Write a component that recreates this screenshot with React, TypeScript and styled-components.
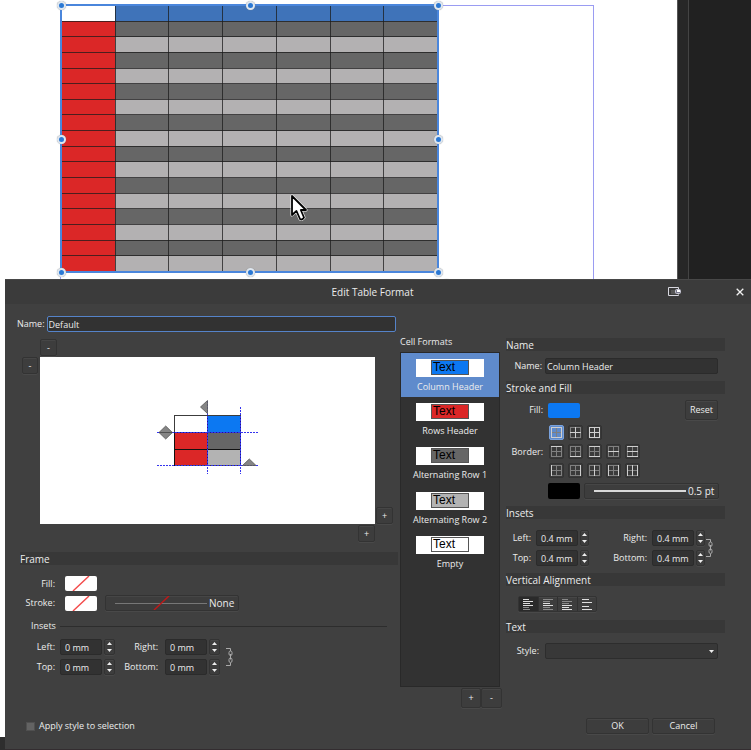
import React, { useId } from "react";
import styled, { createGlobalStyle, css } from "styled-components";

const GlobalStyle = createGlobalStyle`
  *, *::before, *::after { box-sizing: border-box; }
  body { margin: 0; background: #2e2e2e; }
  body, button, input, select {
    font-family: "Open Sans", "Noto Sans", sans-serif;
    font-size: 9px;
    line-height: 12px;
    color: #ececec;
  }
  button { padding: 0; }
`;

/* ---------- document area ---------- */

const Screen = styled.div`
  display: flex;
  flex-direction: column;
  min-height: 100vh;
`;

const Canvas = styled.div`
  display: flex;
  height: 279px;
  overflow: hidden;
`;

const Page = styled.div`
  flex: 1;
  display: flex;
  padding: 5px 83px 0 60px;
  background: #fff;
`;

const MarginFrame = styled.div`
  flex: 1;
  border: 1px solid #9a9cf2;
  border-bottom: 0;
`;

const SidePanel = styled.div`
  width: 74px;
  padding-left: 10px;
  background: #272727;
  border-left: 1px solid #555;
`;

const SidePanelInner = styled.div`
  height: 100%;
  background: #212121;
  border-left: 1px solid #444;
`;

const Selection = styled.div`
  position: relative;
  width: 377px;
  height: 267px;
  margin-top: -1px;
  &::after {
    content: "";
    position: absolute;
    inset: -1px;
    border: 2px solid #4a86dc;
  }
`;

const SheetTable = styled.table`
  width: 100%;
  height: 100%;
  table-layout: fixed;
  border-collapse: collapse;
`;

const cellColors = {
  empty: "#ffffff",
  column: "#3f73b9",
  row: "#db2727",
  dark: "#666666",
  light: "#b3b1b2",
};
type CellKind = keyof typeof cellColors;

const SheetCell = styled.td<{ $kind: CellKind }>`
  height: 15px;
  padding: 0;
  background: ${(p) => cellColors[p.$kind]};
  border: 1px solid rgba(28, 28, 28, 0.75);
`;

const Handle = styled.i<{ $x: number; $y: number }>`
  position: absolute;
  z-index: 1;
  left: ${(p) => p.$x}%;
  top: ${(p) => p.$y}%;
  width: 9px;
  height: 9px;
  margin: -4px 0 0 -4px;
  border: 2px solid #dfe7f0;
  border-radius: 50%;
  background: #2a78d4;
  box-shadow: 0 0 1px #888;
`;

const Pointer = styled.svg`
  position: absolute;
  left: 229px;
  top: 189px;
`;

const handles = [
  [0, 0], [50, 0], [100, 0],
  [0, 50], [100, 50],
  [0, 100], [50, 100], [100, 100],
  [102, 104],
];
const columns = [0, 1, 2, 3, 4, 5, 6];
const rows = Array.from({ length: 17 }, (_, i) => i);

function kindOf(row: number, col: number): CellKind {
  if (row === 0) return col === 0 ? "empty" : "column";
  if (col === 0) return "row";
  return row % 2 ? "dark" : "light";
}

function Sheet() {
  return (
    <Selection>
      <SheetTable>
        <tbody>
          {rows.map((r) => (
            <tr key={r}>
              {columns.map((c) => <SheetCell key={c} $kind={kindOf(r, c)} />)}
            </tr>
          ))}
        </tbody>
      </SheetTable>
      {handles.map(([x, y]) => <Handle key={`${x}-${y}`} $x={x} $y={y} />)}
      <Pointer width="18" height="28" viewBox="0 0 18 28">
        <path d="M2 2V21L6.500 17L10 25Q12 26.500 14 23.500L10.800 16H16Z" fill="#fff" stroke="#fff" strokeWidth="3" strokeLinejoin="round" />
        <path d="M2 2V21L6.500 17L10 25Q12 26.500 14 23.500L10.800 16H16Z" fill="#fff" stroke="#000" strokeWidth="1.800" strokeLinejoin="round" />
      </Pointer>
    </Selection>
  );
}

/* ---------- dialog frame ---------- */

const Lower = styled.div`
  flex: 1;
  display: flex;
`;

const Gutter = styled.div`
  width: 5px;
  margin-bottom: 13px;
  background: #fff;
`;

const Dialog = styled.form`
  flex: 1;
  display: flex;
  flex-direction: column;
  background: #404040;
  border-bottom: 1px solid #332d30;
`;

const TitleBar = styled.header`
  display: grid;
  grid-template-columns: 1fr auto 1fr;
  align-items: center;
  height: 25px;
  padding-right: 3px;
  border-top: 1px solid #484848;
  background: #3b3b3b;
`;

const Title = styled.h1`
  grid-column: 2;
  margin: 0 8px 0 0;
  font-size: 10px;
  line-height: 14px;
  font-weight: 400;
`;

const WindowButtons = styled.div`
  display: flex;
  justify-content: flex-end;
  gap: 49px;
`;

const WindowButton = styled.button`
  width: 16px;
  height: 16px;
  display: grid;
  place-items: center;
  border: 0;
  background: none;
`;

const Body = styled.div`
  display: flex;
  align-items: flex-start;
`;

const PreviewColumn = styled.div`
  flex: 1;
  padding: 12px 2px 0 12px;
`;

const FormatsColumn = styled.div`
  width: 102px;
  margin-right: 4px;
  padding-top: 32px;
`;

const DetailsColumn = styled.div`
  width: 219px;
  margin-right: 26px;
  padding-top: 34px;
`;

/* ---------- shared controls ---------- */

const raised = css`
  border: 1px solid #333;
  border-radius: 2px;
  background: #3d3d3d;
  box-shadow: 0 1px 0 #494949, inset 0 1px 0 #464646;
`;

const PushButton = styled.button<{ $w: number; $h: number }>`
  ${raised}
  width: ${(p) => p.$w}px;
  height: ${(p) => p.$h}px;
`;

const TextBox = styled.input<{ $focused?: boolean }>`
  flex: 1;
  min-width: 0;
  width: 100%;
  height: 16px;
  padding: 0 1px;
  border: 1px solid ${(p) => (p.$focused ? "#5583c9" : "#2b2b2b")};
  border-radius: 2px;
  background: #323232;
  outline: none;
`;

const NumberBox = styled(TextBox)`
  padding: 0 4px;
`;

const SectionTitle = styled.h2`
  height: 13px;
  margin: 0;
  background: #383838;
  font-size: 10px;
  line-height: 15px;
  font-weight: 400;
`;

const DetailRows = styled.div`
  margin: 0 7px 7px 0;
`;

const Line = styled.div<{ $label: number; $gap?: number; $top: number }>`
  display: grid;
  grid-template-columns: ${(p) => p.$label}px 1fr;
  column-gap: ${(p) => p.$gap ?? 10}px;
  align-items: center;
  margin-top: ${(p) => p.$top}px;
  > :first-child { justify-self: end; white-space: nowrap; }
`;

const Controls = styled.div<{ $spread?: boolean }>`
  grid-column: 2;
  display: flex;
  align-items: center;
  justify-content: ${(p) => (p.$spread ? "space-between" : "flex-start")};
`;

const Swatch = styled.button<{ $color: string; $tall?: boolean }>`
  width: 32px;
  height: ${(p) => (p.$tall ? 16 : 15)}px;
  border: 0;
  border-radius: 2px;
  background: ${(p) => p.$color};
  overflow: hidden;
  svg { display: block; }
`;

const StrokeButton = styled.button`
  ${raised}
  flex: 1;
  height: 16px;
  margin-left: 4px;
  padding: 0 4px 0 9px;
  display: flex;
  align-items: center;
  gap: 2px;
  font-size: 10px;
  svg { flex: 1; min-width: 0; }
`;

const FrameStrokeButton = styled(StrokeButton)`
  flex: 0 1 134px;
  margin-left: 8px;
`;

function NoFillSwatch({ id, label }: { id: string; label: string }) {
  return (
    <Swatch type="button" id={id} aria-label={label} $color="#fff">
      <svg width="32" height="15" viewBox="0 0 32 15">
        <path d="M8 15L24 0" stroke="#f34a4a" strokeWidth="1.400" />
      </svg>
    </Swatch>
  );
}

/* ---------- inset editor ---------- */

const InsetsGrid = styled.div<{ $columns: string; $top: number }>`
  display: grid;
  grid-template-columns: ${(p) => p.$columns};
  grid-auto-rows: 16px;
  row-gap: 4px;
  align-items: center;
  margin: ${(p) => p.$top}px 0 7px;
`;

const InsetLabel = styled.label<{ $gap: number }>`
  justify-self: end;
  padding-right: ${(p) => p.$gap}px;
  white-space: nowrap;
`;

const Stepper = styled.span<{ $w: number }>`
  ${raised}
  display: grid;
  grid-template-rows: 1fr 1fr;
  width: ${(p) => p.$w}px;
  height: 16px;
  margin-left: 2px;
`;

const StepButton = styled.button`
  display: grid;
  place-items: center;
  border: 0;
  background: none;
`;

const ChainButton = styled.button`
  grid-column: 7;
  grid-row: 1 / span 2;
  border: 0;
  background: none;
  svg { display: block; }
`;

type InsetStyle = { value: string; gap: number; stepper: number };

function InsetField({ label, value, gap, stepper }: InsetStyle & { label: string }) {
  const id = useId();
  return (
    <>
      <InsetLabel htmlFor={id} $gap={gap}>{label}:</InsetLabel>
      <NumberBox id={id} defaultValue={value} />
      <Stepper $w={stepper}>
        <StepButton type="button" aria-label={`Increase ${label}`}>
          <svg width="5" height="3" viewBox="0 0 5 3"><path d="M0 3L2.500 0L5 3Z" fill="#eee" /></svg>
        </StepButton>
        <StepButton type="button" aria-label={`Decrease ${label}`}>
          <svg width="5" height="3" viewBox="0 0 5 3"><path d="M0 0L2.500 3L5 0Z" fill="#eee" /></svg>
        </StepButton>
      </Stepper>
    </>
  );
}

function Insets({ columns: cols, top, gap, ...rest }: InsetStyle & { columns: string; top: number }) {
  return (
    <InsetsGrid $columns={cols} $top={top}>
      <InsetField label="Left" gap={5} {...rest} />
      <InsetField label="Right" gap={gap} {...rest} />
      <ChainButton type="button" aria-label="Link insets">
        <svg width="7" height="20" viewBox="0 0 7 20" fill="none" stroke="#aaa" strokeWidth="1">
          <path d="M0 1.500H4.500V4M0 18.500H4.500V16" />
          <rect x="3" y="4" width="3" height="4.500" rx="1.500" />
          <rect x="3" y="11" width="3" height="4.500" rx="1.500" />
          <path d="M4.500 7V12.500" />
        </svg>
      </ChainButton>
      <InsetField label="Top" gap={5} {...rest} />
      <InsetField label="Bottom" gap={gap} {...rest} />
    </InsetsGrid>
  );
}

/* ---------- preview column ---------- */

const NameLine = styled.div`
  display: flex;
  align-items: center;
  gap: 2px;
  margin-right: 2px;
`;

const PreviewGrid = styled.div`
  display: grid;
  grid-template-columns: 18px 1fr 18px;
  grid-template-rows: 18px 167px 18px;
  margin: 7px 5px 0 5px;
`;

const GridSlot = styled.div<{ $area: string; $align: string }>`
  display: flex;
  grid-area: ${(p) => p.$area};
  place-self: ${(p) => p.$align};
`;

const PreviewPane = styled.div`
  grid-area: 2 / 2;
  display: grid;
  place-items: center;
  background: #fff;
`;

const FrameSection = styled.section`
  margin: 10px 0 0 3px;
`;

const InsetsDivider = styled.h3`
  display: flex;
  align-items: center;
  gap: 4px;
  margin: 9px 11px 0;
  font-size: 9px;
  font-weight: 400;
  &::after { content: ""; flex: 1; height: 1px; background: #2d2d2d; }
`;

function FormatDiagram() {
  return (
    <svg width="121" height="91" viewBox="107 38 121 91">
      <g stroke="#3c3c3c" strokeWidth="1">
        <rect x="134.500" y="58.500" width="33" height="17" fill="#fff" />
        <rect x="167.500" y="58.500" width="33" height="17" fill="#0c78f2" />
        <rect x="134.500" y="75.500" width="33" height="17" fill="#db2727" />
        <rect x="167.500" y="75.500" width="33" height="17" fill="#666" />
        <rect x="134.500" y="92.500" width="33" height="16" fill="#db2727" />
        <rect x="167.500" y="92.500" width="33" height="16" fill="#b3b3b3" />
      </g>
      <path d="M134 92.500H201M134.500 75V109" stroke="#111" fill="none" />
      <path d="M134 75.500H201M167.500 59V109M200.500 59V109" stroke="#1a1a8c" fill="none" />
      <path d="M117 75.500H218M117 108.500H218M167.500 44V117M200.500 50V117" stroke="#3434ee" strokeDasharray="2 1" fill="none" />
      <g fill="#858585" stroke="#555" strokeWidth="0.800">
        <path d="M125.700 69L132.400 75.500L125.700 82L119 75.500Z" />
        <path d="M160.500 50L167.500 43.500V56.500Z" />
        <path d="M209.300 102L202.500 108.500H216Z" />
      </g>
      <path d="M119 75.500H132" stroke="#444" strokeWidth="0.800" />
    </svg>
  );
}

/* ---------- cell formats ---------- */

const FormatsLabel = styled.h2`
  margin: 0 0 4px;
  font-size: 9px;
  font-weight: 400;
`;

const FormatList = styled.ul`
  display: grid;
  grid-template-rows: repeat(5, 1fr) 112px;
  width: 100px;
  height: 335px;
  margin: 0;
  padding: 0;
  list-style: none;
  border: 1px solid #292929;
  background: #323232;
`;

const FormatItem = styled.button<{ $selected: boolean }>`
  display: flex;
  flex-direction: column;
  align-items: center;
  gap: 4px;
  width: 100%;
  height: 100%;
  padding-top: 6px;
  border: 0;
  background: ${(p) => (p.$selected ? "#5f8bcc" : "transparent")};
  white-space: nowrap;
`;

const Thumb = styled.span`
  width: 68px;
  height: 18px;
  padding: 1px 15px 1px 15px;
  background: #fff;
`;

const ThumbCell = styled.span<{ $color: string }>`
  display: block;
  height: 15px;
  padding-left: 1px;
  border: 1px solid #555;
  background: ${(p) => p.$color};
  color: #000;
  font: 12px/12px "Liberation Sans", Arial, sans-serif;
  text-align: left;
`;

const ListButtons = styled.div`
  display: flex;
  justify-content: flex-end;
  margin-top: 1px;
`;

const formats = [
  { name: "Column Header", color: "#0c78f2" },
  { name: "Rows Header", color: "#db2727" },
  { name: "Alternating Row 1", color: "#666" },
  { name: "Alternating Row 2", color: "#b3b3b3" },
  { name: "Empty", color: "#fff" },
];

/* ---------- border and alignment pickers ---------- */

const BorderGrid = styled.div`
  display: grid;
  gap: 4px;
`;

const BorderRow = styled.div`
  display: flex;
  gap: 4px;
`;

const BorderButton = styled.button<{ $selected: boolean }>`
  display: grid;
  place-items: center;
  width: 15px;
  height: 15px;
  border: 1px solid ${(p) => (p.$selected ? "#7aa2dc" : "#333")};
  border-radius: 2px;
  background: ${(p) => (p.$selected ? "#5f8bcc" : "#3a3a3a")};
`;

const edgePaths: Record<string, string> = {
  t: "M0 0.500H11",
  m: "M0 5.500H11",
  b: "M0 10.500H11",
  l: "M0.500 0V11",
  c: "M5.500 0V11",
  r: "M10.500 0V11",
};

const borderRows = [
  [["Outside", "tblr"], ["Inside", "mc"], ["All", "tmblcr"]],
  [["Top", "t"], ["Bottom", "b"], ["Top and bottom", "tb"], ["Middle rows", "m"], ["All rows", "tmb"]],
  [["Left", "l"], ["Right", "r"], ["Middle columns", "c"], ["Left and right", "lr"], ["All columns", "lcr"]],
];

function BorderPicker() {
  return (
    <BorderGrid role="group" aria-label="Border">
      {borderRows.map((row, i) => (
        <BorderRow key={i}>
          {row.map(([name, edges]) => (
            <BorderButton type="button" key={name} aria-label={name} $selected={name === "Outside"}>
              <svg width="11" height="11" viewBox="0 0 11 11" fill="none">
                {Object.keys(edgePaths).map((e) => <path key={e} d={edgePaths[e]} stroke="#808080" />)}
                {edges.split("").map((e) => <path key={e} d={edgePaths[e]} stroke="#cfcfcf" />)}
              </svg>
            </BorderButton>
          ))}
        </BorderRow>
      ))}
    </BorderGrid>
  );
}

const AlignGroup = styled.div`
  ${raised}
  display: flex;
  width: 79px;
  height: 16px;
  margin: 10px 0 8px 12px;
`;

const AlignButton = styled.button<{ $selected: boolean }>`
  flex: 1;
  display: grid;
  place-items: center;
  border: 0;
  border-right: 1px solid #303030;
  background: ${(p) => (p.$selected ? "#2a2a2a" : "transparent")};
  &:last-child { border-right: 0; }
`;

const alignOptions = [
  { name: "Top", bright: "M0 1.500H6M0 3.500H10M0 5.500H7M0 7.500H10", dim: "M0 9.500H6M0 11.500H7" },
  { name: "Middle", bright: "M0 5.500H7M0 7.500H10", dim: "M0 1.500H10M0 3.500H7M0 9.500H7M0 11.500H10" },
  { name: "Bottom", bright: "M0 7.500H10M0 9.500H7M0 11.500H10", dim: "M0 1.500H6M0 3.500H10M0 5.500H7" },
  { name: "Justify", bright: "M0 1.500H7M0 4.500H10M0 8.500H7M0 11.500H10", dim: "" },
];

const StyleBox = styled.span`
  position: relative;
  display: flex;
  align-items: center;
`;

const StyleSelect = styled.select`
  appearance: none;
  width: 100%;
  height: 16px;
  border: 1px solid #2d2d2d;
  border-radius: 2px;
  background: #383838;
`;

const Caret = styled.svg`
  position: absolute;
  right: 4px;
  pointer-events: none;
`;

/* ---------- footer ---------- */

const Footer = styled.footer`
  display: flex;
  align-items: center;
  gap: 3px;
  margin-top: auto;
  padding: 10px 36px 15px 21px;
`;

const CheckLabel = styled.label`
  display: flex;
  align-items: center;
  gap: 4px;
  margin-right: auto;
`;

const CheckBox = styled.input`
  appearance: none;
  width: 9px;
  height: 9px;
  margin: 0;
  border: 1px solid #505050;
  background: #636363;
`;

export default function App() {
  return (
    <Screen>
      <GlobalStyle />
      <Canvas>
        <Page>
          <MarginFrame><Sheet /></MarginFrame>
        </Page>
        <SidePanel><SidePanelInner /></SidePanel>
      </Canvas>
      <Lower>
        <Gutter />
        <Dialog onSubmit={(e: React.FormEvent) => e.preventDefault()}>
          <TitleBar>
            <Title>Edit Table Format</Title>
            <WindowButtons>
              <WindowButton type="button" aria-label="Dock">
                <svg width="14" height="10" viewBox="0 0 14 10" fill="none">
                  <path d="M10.500 2.500V0.500H0.500V8.500H10.500V7.500" stroke="#d8d8e0" />
                  <rect x="3" y="3" width="5" height="4" fill="#555" />
                  <rect x="7.500" y="2.500" width="5" height="4" rx="1" fill="#77778a" stroke="#c4c4d0" />
                  <path d="M9 3H12V5H9Z" fill="#fff" />
                </svg>
              </WindowButton>
              <WindowButton type="button" aria-label="Close">
                <svg width="8" height="8" viewBox="0 0 8 8"><path d="M0.700 0.700L7.300 7.300M7.300 0.700L0.700 7.300" stroke="#f0f0f0" strokeWidth="1.300" /></svg>
              </WindowButton>
            </WindowButtons>
          </TitleBar>

          <Body>
            <PreviewColumn>
              <NameLine>
                <label htmlFor="table-name">Name:</label>
                <TextBox id="table-name" defaultValue="Default" $focused />
              </NameLine>
              <PreviewGrid>
                <GridSlot $area="1 / 2" $align="start"><PushButton type="button" $w={17} $h={17}>-</PushButton></GridSlot>
                <GridSlot $area="2 / 1" $align="start"><PushButton type="button" $w={16} $h={17}>-</PushButton></GridSlot>
                <PreviewPane><FormatDiagram /></PreviewPane>
                <GridSlot $area="2 / 3" $align="end"><PushButton type="button" $w={17} $h={17}>+</PushButton></GridSlot>
                <GridSlot $area="3 / 2" $align="end"><PushButton type="button" $w={17} $h={17}>+</PushButton></GridSlot>
              </PreviewGrid>

              <FrameSection>
                <SectionTitle>Frame</SectionTitle>
                <Line $label={35} $top={11}>
                  <label htmlFor="frame-fill">Fill:</label>
                  <Controls><NoFillSwatch id="frame-fill" label="Frame fill" /></Controls>
                </Line>
                <Line $label={35} $top={4}>
                  <label htmlFor="frame-stroke">Stroke:</label>
                  <Controls>
                    <NoFillSwatch id="frame-stroke" label="Frame stroke" />
                    <FrameStrokeButton type="button">
                      <svg height="14" viewBox="0 0 92 14">
                        <path d="M0 7.500H92" stroke="#777" />
                        <path d="M39 14L54 0" stroke="#c01818" strokeWidth="1.400" />
                      </svg>
                      None
                    </FrameStrokeButton>
                  </Controls>
                </Line>
                <InsetsDivider>Insets</InsetsDivider>
                <Insets value="0 mm" columns="40px 42px 14px 49px 42px 19px 7px" top={7} gap={7} stepper={11} />
              </FrameSection>
            </PreviewColumn>

            <FormatsColumn>
              <FormatsLabel>Cell Formats</FormatsLabel>
              <FormatList>
                {formats.map((f, i) => (
                  <li key={f.name}>
                    <FormatItem type="button" $selected={i === 0}>
                      <Thumb><ThumbCell $color={f.color}>Text</ThumbCell></Thumb>
                      {f.name}
                    </FormatItem>
                  </li>
                ))}
              </FormatList>
              <ListButtons>
                <PushButton type="button" $w={20} $h={20}>+</PushButton>
                <PushButton type="button" $w={21} $h={20}>-</PushButton>
              </ListButtons>
            </FormatsColumn>

            <DetailsColumn>
              <SectionTitle>Name</SectionTitle>
              <DetailRows>
                <Line $label={36} $gap={3} $top={7}>
                  <label htmlFor="format-name">Name:</label>
                  <TextBox id="format-name" defaultValue="Column Header" />
                </Line>
              </DetailRows>
              <SectionTitle>Stroke and Fill</SectionTitle>
              <DetailRows>
                <Line $label={37} $gap={5} $top={6}>
                  <label htmlFor="format-fill">Fill:</label>
                  <Controls $spread>
                    <Swatch type="button" id="format-fill" $color="#0c78f2" />
                    <PushButton type="button" $w={33} $h={20}>Reset</PushButton>
                  </Controls>
                </Line>
                <Line $label={37} $gap={6} $top={5}>
                  <span>Border:</span>
                  <BorderPicker />
                </Line>
                <Line $label={37} $gap={5} $top={5}>
                  <Controls>
                    <Swatch type="button" aria-label="Border color" $color="#000" $tall />
                    <StrokeButton type="button">
                      <svg height="14" viewBox="0 0 92 14" preserveAspectRatio="none">
                        <path d="M0 7H92" stroke="#d8d8d8" strokeWidth="2" />
                      </svg>
                      0.5 pt
                    </StrokeButton>
                  </Controls>
                </Line>
              </DetailRows>
              <SectionTitle>Insets</SectionTitle>
              <Insets value="0.4 mm" columns="30px 42px 14px 60px 42px 12px 7px" top={11} gap={5} stepper={9} />
              <SectionTitle>Vertical Alignment</SectionTitle>
              <AlignGroup role="group" aria-label="Vertical Alignment">
                {alignOptions.map((o, i) => (
                  <AlignButton type="button" key={o.name} aria-label={o.name} $selected={i === 0}>
                    <svg width="10" height="13" viewBox="0 0 10 13">
                      <path d={o.dim} stroke="#8a8a8a" />
                      <path d={o.bright} stroke="#dedede" />
                    </svg>
                  </AlignButton>
                ))}
              </AlignGroup>
              <SectionTitle>Text</SectionTitle>
              <DetailRows>
                <Line $label={33} $gap={6} $top={10}>
                  <label htmlFor="text-style">Style:</label>
                  <StyleBox>
                    <StyleSelect id="text-style" defaultValue="" />
                    <Caret width="5" height="3" viewBox="0 0 5 3"><path d="M0 0H5L2.500 3Z" fill="#eee" /></Caret>
                  </StyleBox>
                </Line>
              </DetailRows>
            </DetailsColumn>
          </Body>

          <Footer>
            <CheckLabel><CheckBox type="checkbox" />Apply style to selection</CheckLabel>
            <PushButton type="button" $w={63} $h={16}>OK</PushButton>
            <PushButton type="button" $w={63} $h={16}>Cancel</PushButton>
          </Footer>
        </Dialog>
      </Lower>
    </Screen>
  );
}
